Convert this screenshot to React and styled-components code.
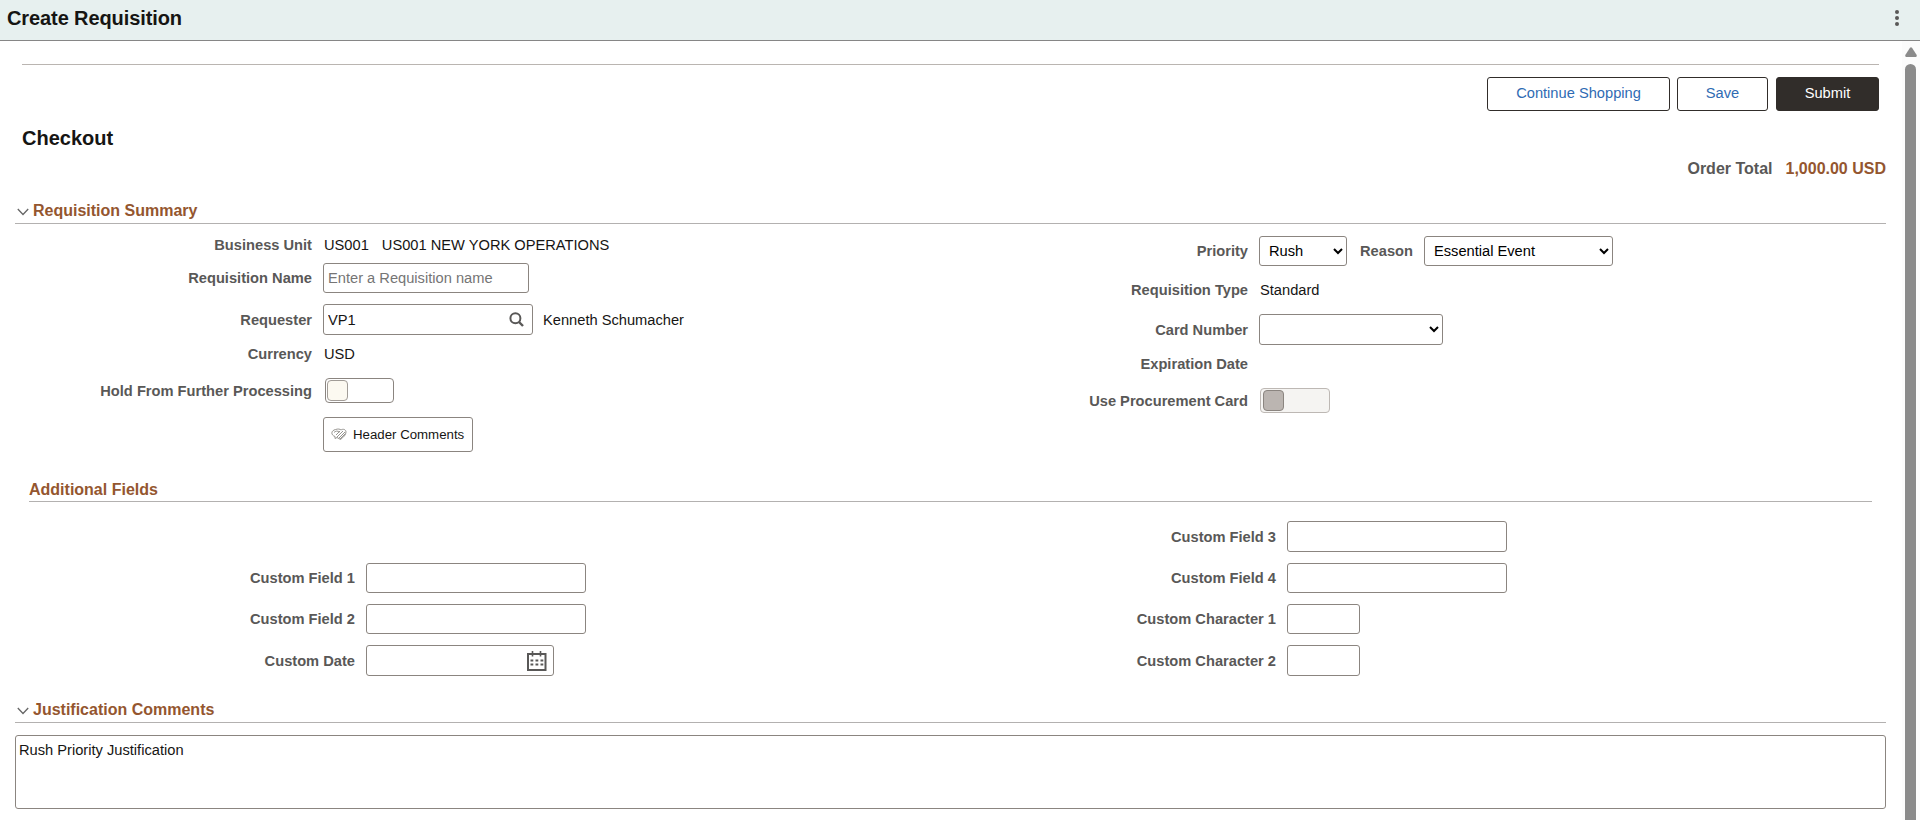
import React from "react"
import styled, { createGlobalStyle } from "styled-components"

const GlobalStyle = createGlobalStyle`
  :root {
    --color-text: #161513;
    --color-label: #595857;
    --color-heading: #94562f;
    --color-link: #2f6bb3;
    --color-border: #8b8580;
    --color-rule: #b3b1b0;
  }
  * {
    box-sizing: border-box;
  }
  body {
    margin: 0;
    background: #fff;
    color: var(--color-text);
    font: 14.67px "Liberation Sans", Arial, sans-serif;
    overflow: hidden;
  }
`
const Page = styled.div`
  height: 820px;
  display: flex;
  flex-direction: column;
`
const TitleBar = styled.header`
  height: 41px;
  flex: none;
  display: flex;
  justify-content: space-between;
  padding: 0 21px 0 7px;
  background: #e7f0ef;
  border-bottom: 1px solid #868686;
`
const Title = styled.h1`
  margin: 0;
  font-size: 20px;
  line-height: 36px;
  letter-spacing: -0.1px;
`
const MenuButton = styled.button`
  width: 4px;
  height: 36px;
  padding: 0;
  border: 0;
  background: none;
`
const Body = styled.div`
  flex: 1;
  min-height: 0;
  display: flex;
`
const Main = styled.main`
  flex: 1;
  padding: 23px 0 0 15px;
`
const Scrollbar = styled.div`
  width: 18px;
  margin-left: 16px;
  padding: 6px 4px 0 3px;
  background: #fcfcfc;
  display: flex;
  flex-direction: column;
  gap: 7px;
`
const ScrollThumb = styled.div`
  flex: 1;
  width: 11px;
  border-radius: 6px 6px 0 0;
  background: #8b8b8b;
`
const Toolbar = styled.div`
  display: flex;
  justify-content: flex-end;
  margin: 0 7px;
  padding-top: 12px;
  border-top: 1px solid #bab5b1;
`
const ToolbarButton = styled.button`
  width: ${p => p.$width}px;
  height: 34px;
  margin-left: ${p => p.$gap || 0}px;
  padding: 0 0 3px;
  border: 1px solid #312d2a;
  border-radius: 3px;
  background: ${p => (p.$primary ? "#312d2a" : "#fff")};
  color: ${p => (p.$primary ? "#fff" : "var(--color-link)")};
  font: inherit;
`
const PageHeading = styled.h2`
  margin: 15px 7px 0;
  font-size: 20px;
  line-height: 24px;
`
const OrderTotal = styled.div`
  display: flex;
  justify-content: flex-end;
  gap: 13px;
  margin-top: 9px;
  font-size: 16px;
  font-weight: bold;
  line-height: 20px;
  color: var(--color-label);
`
const Amount = styled.span`
  color: var(--color-heading);
`
const SectionHeading = styled.h3`
  display: flex;
  align-items: center;
  height: 24px;
  margin: ${p => p.$margin};
  padding: ${p => (p.$collapsible ? "0 0 1px 2px" : "1px 0 0")};
  border-bottom: 1px solid var(--color-rule);
  color: var(--color-heading);
  font-size: 16px;
  line-height: 20px;
`
const Chevron = styled.svg`
  margin: 1px 4px 0 0;
`
const Columns = styled.div`
  display: flex;
  height: ${p => p.$height}px;
`
const Column = styled.div`
  width: ${p => p.$width}px;
  padding-top: ${p => p.$top}px;
`
const Row = styled.div`
  display: flex;
  align-items: center;
  height: ${p => p.$height || 20}px;
  margin-top: ${p => p.$gap || 0}px;
`
const Label = styled.label`
  width: ${p => p.$width}px;
  margin-right: 11px;
  text-align: right;
  font-weight: bold;
  color: var(--color-label);
  white-space: nowrap;
`
const InlineLabel = styled(Label)`
  margin: 0 11px 0 13px;
`
const Value = styled.span`
  margin-right: 12px;
  padding-left: 1px;
  white-space: nowrap;
`
const TextInput = styled.input`
  width: ${p => p.$width}px;
  height: 100%;
  padding: 0 4px;
  border: 1px solid var(--color-border);
  border-radius: 3px;
  background: #fff;
  color: inherit;
  font: inherit;
  &::placeholder {
    color: #757575;
  }
`
const InputBox = styled.div`
  display: flex;
  align-items: center;
  width: ${p => p.$width}px;
  height: 100%;
  margin-right: 9px;
  padding-right: ${p => p.$pad}px;
  border: 1px solid var(--color-border);
  border-radius: 3px;
`
const BareInput = styled(TextInput)`
  flex: 1;
  min-width: 0;
  border: 0;
  background: none;
`
const Select = styled.select`
  width: ${p => p.$width}px;
  height: 100%;
  padding: 0 0 0 5px;
  border: 1px solid var(--color-border);
  border-radius: 3px;
  background: #fff;
  color: #000;
  font: inherit;
`
const Toggle = styled.div`
  width: ${p => p.$width}px;
  height: 25px;
  margin-left: ${p => (p.$disabled ? 1 : 2)}px;
  padding: 1px;
  border: 1px solid ${p => (p.$disabled ? "#bdb8b4" : "var(--color-border)")};
  border-radius: 4px;
  background: ${p => (p.$disabled ? "#f5f4f2" : "#fff")};
`
const ToggleThumb = styled.div`
  width: 21px;
  height: 21px;
  margin-left: ${p => (p.$disabled ? 1 : 0)}px;
  border: 1px solid ${p => (p.$disabled ? "#8b8580" : "#a19c97")};
  border-radius: 4px;
  background: ${p => (p.$disabled ? "#bbb5b1" : "#fcf9f1")};
`
const CommentsButton = styled.button`
  display: flex;
  align-items: center;
  width: 150px;
  height: 35px;
  margin: 14px 0 0 308px;
  padding: 0 0 0 7px;
  gap: 6px;
  border: 1px solid var(--color-border);
  border-radius: 3px;
  background: #fff;
  color: var(--color-text);
  font: 13.25px "Liberation Sans", Arial, sans-serif;
  white-space: nowrap;
`
const Comments = styled.textarea`
  display: block;
  width: 100%;
  height: 74px;
  margin-top: 12px;
  padding: 5px 3px;
  border: 1px solid var(--color-border);
  border-radius: 3px;
  color: inherit;
  font: inherit;
  line-height: 18px;
  resize: none;
`

const ExpandIcon = () => (
  <Chevron width="12" height="8" viewBox="0 0 12 8" fill="none" stroke="#666" strokeWidth="1.3">
    <path d="M.8 1 6 6.5 11.2 1" />
  </Chevron>
)

const SearchIcon = () => (
  <svg width="15" height="15" viewBox="0 0 15 15" fill="none" stroke="#595857">
    <circle cx="6.4" cy="6.2" r="5" strokeWidth="2" />
    <path d="m10 10 4 4" strokeWidth="2.4" />
  </svg>
)

const CalendarIcon = () => (
  <svg width="20" height="20" viewBox="0 0 20 20" fill="none" stroke="#595857">
    <path d="M1 3h17.500v16H1z" strokeWidth="2" />
    <path d="M5.500 0v5.500M13.500 0v5.500" strokeWidth="1.6" />
    <path d="M3.500 9.500h13M3.500 13.500h13" strokeWidth="2" strokeDasharray="2.800 2.200" />
  </svg>
)

const CommentIcon = () => (
  <svg width="16" height="13" viewBox="0 0 16 13" fill="none" stroke="#8b8985" strokeWidth=".9">
    <path d="M4 8.500C-.5 7 0 2.500 4.500 1.500 7 .7 9 1 10 2c2-1.500 5-.5 5 2 0 3-2.500 5-5.500 7.500L6 9.500l-2 1z" />
    <path d="M3 4.500c1-1.500 4-2 5.500-.5M5 7l4-4M6 9l6-6M8 10l6-6M9 11l5-5" />
  </svg>
)

const Field = ({ label, width = 297, height, gap, children }) => (
  <Row $height={height} $gap={gap}>
    <Label $width={width}>{label}</Label>
    {children}
  </Row>
)

const customFields = [
  { label: "Custom Field 3", width: 220, height: 31 },
  { label: "Custom Field 4", width: 220, height: 30, gap: 11 },
  { label: "Custom Character 1", width: 73, height: 30, gap: 11 },
  { label: "Custom Character 2", width: 73, height: 31, gap: 11 },
]

const App = () => {
  return (
    <Page>
      <GlobalStyle />
      <TitleBar>
        <Title>Create Requisition</Title>
        <MenuButton aria-label="Actions">
          <svg width="4" height="36" viewBox="0 0 4 36" fill="#595857">
            <circle cx="2" cy="12" r="2" />
            <circle cx="2" cy="18" r="2" />
            <circle cx="2" cy="24" r="2" />
          </svg>
        </MenuButton>
      </TitleBar>
      <Body>
        <Main>
          <Toolbar>
            <ToolbarButton $width={183}>Continue Shopping</ToolbarButton>
            <ToolbarButton $width={91} $gap={7}>Save</ToolbarButton>
            <ToolbarButton $width={103} $gap={8} $primary>Submit</ToolbarButton>
          </Toolbar>
          <PageHeading>Checkout</PageHeading>
          <OrderTotal>
            <span>Order Total</span>
            <Amount>1,000.00 USD</Amount>
          </OrderTotal>

          <SectionHeading $margin="21px 0 0" $collapsible>
            <ExpandIcon />
            Requisition Summary
          </SectionHeading>
          <Columns $height={254}>
            <Column $width={924} $top={11}>
              <Field label="Business Unit">
                <Value>US001</Value>
                <Value>US001 NEW YORK OPERATIONS</Value>
              </Field>
              <Field label="Requisition Name" height={30} gap={8}>
                <TextInput $width={206} placeholder="Enter a Requisition name" />
              </Field>
              <Field label="Requester" height={31} gap={11}>
                <InputBox $width={210} $pad={8}>
                  <BareInput defaultValue="VP1" />
                  <SearchIcon />
                </InputBox>
                <Value>Kenneth Schumacher</Value>
              </Field>
              <Field label="Currency" gap={9}>
                <Value>USD</Value>
              </Field>
              <Field label="Hold From Further Processing" height={25} gap={14}>
                <Toggle $width={69}>
                  <ToggleThumb />
                </Toggle>
              </Field>
              <CommentsButton>
                <CommentIcon />
                Header Comments
              </CommentsButton>
            </Column>
            <Column $width={947} $top={12}>
              <Field label="Priority" width={309} height={30}>
                <Select $width={88} defaultValue="Rush">
                  <option>Rush</option>
                </Select>
                <InlineLabel>Reason</InlineLabel>
                <Select $width={189} defaultValue="Essential Event">
                  <option>Essential Event</option>
                </Select>
              </Field>
              <Field label="Requisition Type" width={309} gap={14}>
                <Value>Standard</Value>
              </Field>
              <Field label="Card Number" width={309} height={31} gap={14}>
                <Select $width={184} />
              </Field>
              <Field label="Expiration Date" width={309} gap={9} />
              <Field label="Use Procurement Card" width={309} height={25} gap={14}>
                <Toggle $width={70} $disabled>
                  <ToggleThumb $disabled />
                </Toggle>
              </Field>
            </Column>
          </Columns>

          <SectionHeading $margin="0 14px">Additional Fields</SectionHeading>
          <Columns $height={197}>
            <Column $width={924} $top={61}>
              <Field label="Custom Field 1" width={340} height={30}>
                <TextInput $width={220} />
              </Field>
              <Field label="Custom Field 2" width={340} height={30} gap={11}>
                <TextInput $width={220} />
              </Field>
              <Field label="Custom Date" width={340} height={31} gap={11}>
                <InputBox $width={188} $pad={6}>
                  <BareInput />
                  <CalendarIcon />
                </InputBox>
              </Field>
            </Column>
            <Column $width={947} $top={19}>
              {customFields.map(f => (
                <Field key={f.label} label={f.label} width={337} height={f.height} gap={f.gap}>
                  <TextInput $width={f.width} />
                </Field>
              ))}
            </Column>
          </Columns>

          <SectionHeading $margin="0" $collapsible>
            <ExpandIcon />
            Justification Comments
          </SectionHeading>
          <Comments defaultValue="Rush Priority Justification" />
        </Main>
        <Scrollbar>
          <svg width="12" height="10" viewBox="0 0 12 10" fill="#8b8b8b">
            <path d="M5 .8Q6-.5 7 .8L11.700 8Q12 9.700 11 10H1Q0 9.700.3 8z" />
          </svg>
          <ScrollThumb />
        </Scrollbar>
      </Body>
    </Page>
  )
}

export default App
